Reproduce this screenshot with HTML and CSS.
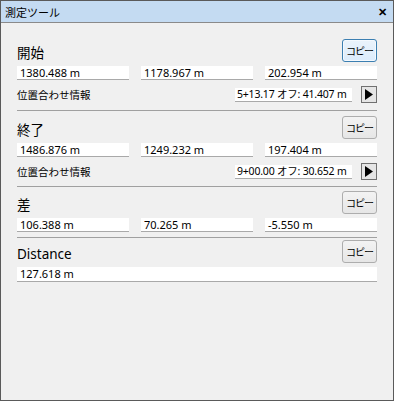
FILE: index.html
```html
<!DOCTYPE html>
<html lang="ja">
<head>
<meta charset="utf-8">
<link rel="stylesheet" href="styles.css">
</head>
<body>
<div class="window">
  <div class="titlebar">
    <span class="title">測定ツール</span>
    <span class="close">✕</span>
  </div>
  <div class="content">
    <section class="sec s1">
      <div class="head"><span class="label">開始</span><button class="copy focus">コピー</button></div>
      <div class="fields">
        <div class="field">1380.488 m</div>
        <div class="field">1178.967 m</div>
        <div class="field">202.954 m</div>
      </div>
      <div class="info">
        <span class="info-label">位置合わせ情報</span>
        <div class="field info-val">5+13.17 オフ: 41.407 m</div>
        <button class="arrow"><svg width="8" height="11" viewBox="0 0 8 11"><path d="M0 0 L8 5.5 L0 11 Z" fill="#000"/></svg></button>
      </div>
    </section>
    <div class="sep"></div>
    <section class="sec s2">
      <div class="head"><span class="label">終了</span><button class="copy">コピー</button></div>
      <div class="fields">
        <div class="field">1486.876 m</div>
        <div class="field">1249.232 m</div>
        <div class="field">197.404 m</div>
      </div>
      <div class="info">
        <span class="info-label">位置合わせ情報</span>
        <div class="field info-val">9+00.00 オフ: 30.652 m</div>
        <button class="arrow"><svg width="8" height="11" viewBox="0 0 8 11"><path d="M0 0 L8 5.5 L0 11 Z" fill="#000"/></svg></button>
      </div>
    </section>
    <div class="sep"></div>
    <section class="sec s3">
      <div class="head"><span class="label">差</span><button class="copy">コピー</button></div>
      <div class="fields">
        <div class="field">106.388 m</div>
        <div class="field">70.265 m</div>
        <div class="field">-5.550 m</div>
      </div>
    </section>
    <div class="sep"></div>
    <section class="sec s4">
      <div class="head"><span class="label">Distance</span><button class="copy">コピー</button></div>
      <div class="field wide">127.618 m</div>
    </section>
  </div>
</div>
</body>
</html>
```

FILE: styles.css
```css
* { box-sizing: border-box; }
html, body { margin: 0; padding: 0; }
body {
  width: 394px;
  height: 401px;
  font-family: "Noto Sans", "Noto Sans CJK JP", sans-serif;
  color: #000;
}
.window {
  width: 394px;
  height: 401px;
  border: 1px solid #5a5a5a;
  background: #f0f0f0;
  display: flex;
  flex-direction: column;
}
.titlebar {
  height: 22px;
  background: #c4dbf2;
  border-bottom: 1px solid #8a8a8a;
  display: flex;
  align-items: center;
  justify-content: space-between;
  padding: 0 6px 0 4px;
}
.title {
  font-family: "Noto Sans CJK JP", sans-serif;
  font-size: 11px;
  line-height: 14px;
}
.close {
  font-size: 11px;
  font-weight: bold;
  line-height: 12px;
}
.content {
  padding: 16px 16px 0 16px;
  display: flex;
  flex-direction: column;
}
.head {
  display: flex;
  justify-content: space-between;
  align-items: flex-end;
  height: 23px;
}
.label {
  font-family: "Noto Sans", "Noto Sans CJK JP", sans-serif;
  font-size: 13.5px;
  line-height: 16px;
  padding-bottom: 1px;
}
.copy {
  width: 35px;
  height: 23px;
  padding: 0;
  border: 1px solid #adadad;
  border-radius: 3px;
  background: linear-gradient(#f3f3f3, #e6e6e6);
  font-family: "Noto Sans CJK JP", sans-serif;
  font-size: 10px;
  letter-spacing: -1px;
  color: #000;
  line-height: 12px;
}
.copy.focus {
  border-color: #3c7fb1;
  background: linear-gradient(#eaf3fb, #dcecfc);
  box-shadow: inset 0 0 0 1px #f4f9fe;
}
.fields {
  display: grid;
  grid-template-columns: 112px 112px 112px;
  justify-content: space-between;
  margin-top: 4px;
}
.field {
  height: 14px;
  background: #fff;
  border-bottom: 1px solid #a9a9a9;
  font-size: 11px;
  line-height: 13px;
  padding-left: 3px;
  white-space: nowrap;
  overflow: hidden;
  font-family: "Noto Sans", "Noto Sans CJK JP", sans-serif;
}
.field.wide { margin-top: 4px; height: 15px; }
.info {
  display: flex;
  align-items: center;
  margin-top: 6px;
  height: 17px;
}
.info-label {
  font-family: "Noto Sans CJK JP", sans-serif;
  font-size: 10.5px;
  line-height: 14px;
  flex: 1;
}
.info-val {
  width: 117px;
  margin-right: 9px;
  font-size: 10.5px;
  letter-spacing: -0.2px;
  padding-left: 2px;
}
.arrow {
  width: 16px;
  height: 17px;
  padding: 0;
  border: 1px solid #707070;
  background: #e5e5e5;
  display: flex;
  align-items: center;
  justify-content: center;
}
.sep {
  height: 1px;
  background: #a0a0a0;
}
.s1 { margin-bottom: 7px; }
.s2 { margin-top: 5px; margin-bottom: 6px; }
.s3 { margin-top: 4px; margin-bottom: 5px; }
.s4 { margin-top: 2px; }
```
